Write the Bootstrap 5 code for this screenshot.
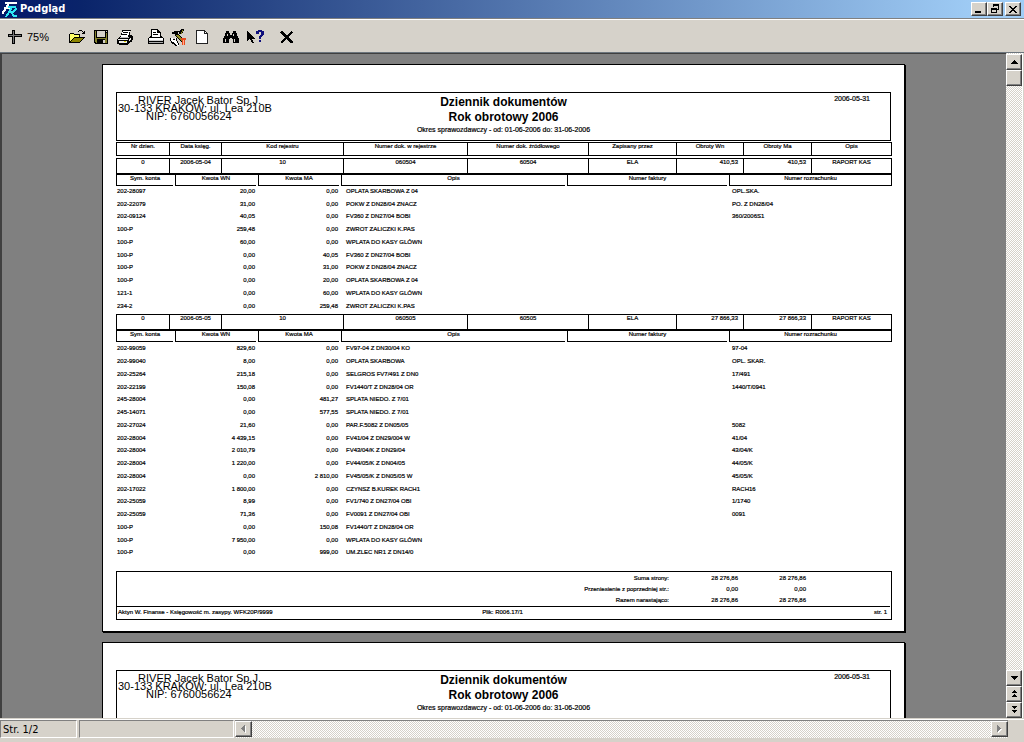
<!DOCTYPE html>
<html lang="pl">
<head>
<meta charset="utf-8">
<meta name="viewport" content="width=device-width, initial-scale=1">
<title>Podgląd</title>
<link href="https://cdn.jsdelivr.net/npm/bootstrap@5.3.0/dist/css/bootstrap.min.css" rel="stylesheet">
<style>
  :root { --face: #d6d2ca; --dark: #404040; --mid: #808080; }
  body { background: var(--face); color: #000; font-family: "DejaVu Sans Condensed", "DejaVu Sans", sans-serif; font-size: 11px; line-height: 14px; }
  button { color: #000; }
  svg { display: block; shape-rendering: crispEdges; }

  /* window chrome */
  .titlebar { height: 18px; background: linear-gradient(to right, #04196a, #0a246a 8%, #a0cdf6 96%); color: #fff; padding: 0 3px 0 2px; }
  .titlebar h1 { font-size: 11px; font-weight: 700; line-height: 18px; padding-left: 2px; }
  .raised { background: var(--face); border: 1px solid; border-color: #fff var(--dark) var(--dark) #fff; box-shadow: inset -1px -1px 0 var(--mid); border-radius: 0; padding: 0; display: flex; align-items: center; justify-content: center; flex: none; }
  .winbtn { width: 16px; height: 14px; }
  .winbtn-close { margin-left: 2px; }
  .toolbar { height: 34px; border-top: 1px solid var(--mid); box-shadow: inset 0 1px 0 #fff; padding: 3px 3px 0; }
  .tool { width: 24px; height: 24px; padding: 0; border: 0; background: none; display: flex; align-items: center; justify-content: center; }
  .tools-print { margin-left: 7px; }
  .tools-print .tool { width: 23px; }
  .tools-find { margin-left: 6px; }
  .zoomlevel { width: 38px; font-family: "Liberation Sans", Arial, sans-serif; }

  /* preview area */
  .stage { background: #808080; border-left: 2px solid var(--dark); border-top: 1px solid var(--dark); padding: 10px 101px 0 100px; gap: 10px; min-height: 0; }
  .checker { background: repeating-conic-gradient(#fff 0 25%, var(--face) 0 50%) 0 0 / 2px 2px; }
  .vbar { width: 16px; padding-top: 1px; }
  .vbar .raised { width: 16px; height: 16px; }
  .edge { width: 2px; border-left: 1px solid #fff; }

  /* printed sheet */
  .sheet { flex: none; min-height: 568px; background: #fff; border: 1px solid #000; box-shadow: 1px 1px 0 #000; padding: 27px 12px 11px 13px; font-family: "Liberation Sans", Arial, sans-serif; font-size: 6px; line-height: 7px; }
  .sheet-head { display: grid; grid-template-columns: 1fr auto 1fr; height: 49px; border: 1px solid #000; margin-right: 1px; margin-bottom: 1px; }
  .company { justify-self: start; padding: 3px 0 0 1px; font-size: 11px; line-height: 8px; text-align: center; white-space: pre; }
  .doc-title { padding-top: 2px; text-align: center; }
  .doc-title h2 { font-size: 12px; font-weight: 700; line-height: 15px; margin: 0; }
  .doc-title p { font-size: 7px; line-height: 10px; margin: 0; -webkit-text-stroke: 0.2px #000; }
  .doc-date { font-size: 7px; line-height: 10px; padding: 1px 20px 0 0; text-align: right; -webkit-text-stroke: 0.2px #000; }
  .ledger { width: 100%; table-layout: fixed; border-collapse: separate; border-spacing: 0; -webkit-text-stroke: 0.2px #000; }
  .ledger th { font-weight: 400; text-align: center; }
  .ledger th, .ledger td { padding: 0; vertical-align: top; white-space: nowrap; }
  .master th, .master td { height: 14px; text-align: center; border: solid #000; border-width: 1px 0 1px 1px; }
  .master th:last-child, .master td:last-child { border-right-width: 1px; }
  .master td { height: 15px; border-bottom-width: 0; }
  .ledger .sum { text-align: right; padding-right: 5px; }
  .colnames { margin-bottom: 2px; }
  .detail { margin-bottom: 1px; }
  .detail thead th { border-top: 2px solid #000; border-left: 1px solid #000; padding-right: 2px; }
  .detail thead th:last-child { border-right: 1px solid #000; padding-right: 0; }
  .detail thead span { display: block; height: 11px; border-bottom: 1px solid #000; }
  .detail td { height: 13px; line-height: 10px; }
  .day-one tr:nth-child(4n+2) td, .day-two tr:nth-child(4n) td { height: 12px; }
  .day-two td { line-height: 12px; }
  .detail td:nth-child(1) { padding-left: 1px; }
  .detail td:nth-child(2), .detail td:nth-child(3) { text-align: right; padding-right: 3px; }
  .detail td:nth-child(4) { padding-left: 5px; }
  .detail td:nth-child(6) { padding-left: 3px; }
  .sheet-foot { border: 1px solid #000; margin-top: auto; padding-top: 1px; }
  .totals th, .totals td { line-height: 11px; text-align: right; padding-right: 5px; }
  .totals th { padding-right: 7px; }
  .imprint { display: grid; grid-template-columns: 1fr auto 1fr; border-top: 1px solid #000; margin-right: 1px; padding: 1px 3px 2px 1px; line-height: 9px; -webkit-text-stroke: 0.2px #000; }

  /* status row */
  .statusrow { height: 24px; border-top: 1px solid var(--face); padding-top: 1px; box-shadow: inset 0 1px 0 #fff; }
  .panel { height: 18px; border: 1px solid; border-color: var(--mid) #fff #fff var(--mid); line-height: 17px; padding-left: 2px; }
  .panel-page { width: 77px; }
  .panel-msg { width: 155px; margin-left: 2px; }
  .hbar { height: 18px; margin: 0 16px 0 1px; border-top: 1px solid var(--mid); }
  .hbar .raised { width: 17px; height: 16px; }
</style>
</head>
<body class="vh-100 d-flex flex-column overflow-hidden">

<header class="titlebar d-flex align-items-center">
  <svg width="16" height="17" viewBox="0 0 16 17" fill="none" aria-hidden="true">
    <path d="M3 2h12M7 2L4 7L0 13M2 7h7" stroke="#fff" stroke-width="2"/>
    <path d="M6 6h7l1 2l-3 3h-4M10 6L7 11l-3 5M9 11l3 4h3" stroke="#2ee6f6" stroke-width="2"/>
  </svg>
  <h1 class="m-0 flex-grow-1">Podgląd</h1>
  <button class="raised winbtn" aria-label="Minimalizuj"><svg width="12" height="10"><path d="M2 7h6v2h-6z"/></svg></button>
  <button class="raised winbtn" aria-label="Przywróć"><svg width="12" height="10"><path d="M4 0h6v6h-2v-1h1v-3h-4v1h-1zM2 4h6v5h-6zM3 6v2h4v-2z" fill-rule="evenodd"/></svg></button>
  <button class="raised winbtn winbtn-close" aria-label="Zamknij"><svg width="10" height="9"><path d="M1 1h2v1h1v1h2v-1h1v-1h2v1h-1v1h-1v1h-1v1h1v1h1v1h1v1h-2v-1h-1v-1h-2v1h-1v1h-2v-1h1v-1h1v-1h1v-1h-1v-1h-1v-1h-1z"/></svg></button>
</header>

<nav class="toolbar d-flex align-items-center flex-shrink-0" aria-label="Narzędzia">
  <button class="tool" aria-label="Powiększenie"><svg width="14" height="14"><path d="M0 4h14v3h-14zM4 0h3v14h-3z"/><path d="M1 5h12v1h-12zM5 1h1v12h-1z" fill="#777"/></svg></button>
  <span class="zoomlevel">75%</span>
  <div class="d-flex">
    <button class="tool" aria-label="Otwórz"><svg width="17" height="14"><path d="M0 4h1v-1h4v1h6v3h5v1h-1v1h-1v1h-1v1h-1v1h-1v1h-11z"/><path d="M1 4h4v1h5v2h-5v1h-1v1h-1v1h-1v1h-1z" fill="#ffff66"/><path d="M5 8h9v1h-1v1h-1v1h-1v1h-9v-1h1v-1h1v-1h1z" fill="#8c8400"/><path d="M9 1h1v1h-1zM10 0h3v1h-3zM13 1h1v1h-1zM14 2h1v-1h1v3h-3v-1h1z"/></svg></button>
    <button class="tool" aria-label="Zapisz"><svg width="14" height="14"><path d="M0 0h14v14h-13v-1h-1z"/><path d="M1 1h1v7h10v-5h1v10h-2v-4h-8v4h-1l-1-1z" fill="#84822c"/><path d="M3 1h8v6h-8zM12 1h1v1h-1zM9 10h2v3h-2z" fill="#d6d2ca"/></svg></button>
    <button class="tool" aria-label="Drukuj"><svg width="17" height="15"><path d="M5 0h9v1h-1v4h2v1h1v4h-1v2h-2v1h-1v1h-1v1h-9v-1h-2v-5h1v-1h1v-1h1v-1h1v-3h1z"/><path d="M6 1h7l-2 6h-7z" fill="#fff"/><path d="M6 2h5v1h-5zM5 4h5v1h-5z"/><path d="M1 9h10v1h-10zM2 11h8v2h-8zM12 9h1v-1h1v2h-1v1h-1z" fill="#f0eeea"/><path d="M3 7h9v1h-9z" fill="#bbb"/><path d="M7 11h2v1h-2z" fill="#d9d000"/></svg></button>
  </div>
  <div class="d-flex tools-print">
    <button class="tool" aria-label="Ustawienia wydruku"><svg width="16" height="16"><path d="M3 0h7v1h1v1h1v1h1v4h1v1h1v1h1v6h-16v-6h1v-1h1v-1h1z"/><path d="M4 1h5v3h3v4h-8z" fill="#fff"/><path d="M5 3h3v1h-3zM5 5h5v1h-5z"/><path d="M1 9h14v2h-14z" fill="#fff"/><path d="M1 11h14v1h-14z" fill="#ccc"/><path d="M1 13h14v1h-14z" fill="#aaa"/></svg></button>
    <button class="tool" aria-label="Opcje"><svg width="17" height="17" fill="none"><path d="M6 5L14 13" stroke="#000" stroke-width="4"/><path d="M6 5L14 13" stroke="#8c8a20" stroke-width="2"/><path d="M2 3h2v-1h6v1h-2v3h-2v1h-1v-2h-3z" fill="#000"/><path d="M13 0L10 5" stroke="#000" stroke-width="3"/><path d="M13 1L11 5" stroke="#8c8a20"/><path d="M1 9h2v2h2v-2h1v2h1v2h1v2h1v2h-2v-1h-2v-2h-3v-1h-1z" fill="#fff"/><path d="M0 9h1v3h-1zM1 12h1v1h2v1h1v1h1v1h1v1h-2v-1h-1v-1h-2v-1h-1zM3 10h2v1h-2zM6 9h1v3h1v2h1v2h-1v-2h-1v-2h-1z" fill="#000"/><path d="M11 9h5v2h-1v5h-3v-5h-1z" fill="#e84a1c"/><path d="M13 11h1v5h-1z" fill="#ffb090"/></svg></button>
    <button class="tool" aria-label="Strona"><svg width="12" height="14"><path d="M0 0h9v1h1v1h1v1h1v11h-12z" fill="#222"/><path d="M1 1h7v3h3v9h-10z" fill="#fff"/><path d="M9 2h1v1h-1z" fill="#fff"/></svg></button>
  </div>
  <div class="d-flex tools-find">
    <button class="tool" aria-label="Szukaj"><svg width="16" height="13"><path d="M3 0h3v2h1v2h2v-2h1v-2h3v2h1v3h1v2h1v5h-6v-4h-1v-1h-2v1h-1v4h-6v-5h1v-2h1v-3h1z"/><path d="M4 3h1v2h-1zM2 8h1v3h-1zM10 3h1v2h-1zM11 8h1v3h-1z" fill="#d6d2ca"/></svg></button>
    <button class="tool" aria-label="Pomoc"><svg width="17" height="15"><path d="M0 1l8 8h-3l2 4h-2l-2-4l-3 2z"/><path d="M9 1h2v-1h4v1h2v4h-1v1h-1v1h-1v2h-2v-3h1v-1h1v-3h-2v2h-3zM12 10h2v2h-2z" fill="#10107c"/></svg></button>
  </div>
  <button class="tool ms-2" aria-label="Zamknij podgląd"><svg width="14" height="13" fill="none" stroke="#000"><path d="M1 1L12 12M2 1L13 12M12 1L1 12" stroke-width="2"/></svg></button>
</nav>

<div class="d-flex flex-grow-1 overflow-hidden border-top border-secondary">
  <main class="stage d-flex flex-column flex-grow-1 overflow-hidden">

    <article class="sheet d-flex flex-column">
      <div class="sheet-head">
        <div class="company">   RIVER Jacek Bator Sp.J.
30-133 KRAKÓW: ul. Lea 210B
NIP: 6760056624    </div>
        <div class="doc-title"><h2>Dziennik dokumentów</h2><h2>Rok obrotowy 2006</h2><p>Okres sprawozdawczy - od: 01-06-2006 do: 31-06-2006</p></div>
        <div class="doc-date">2006-05-31</div>
      </div>

      <table class="ledger master colnames">
        <colgroup><col style="width:53px"><col style="width:52px"><col><col style="width:124px"><col style="width:121px"><col style="width:88px"><col style="width:67px"><col style="width:68px"><col style="width:81px"></colgroup>
        <thead><tr><th>Nr dzien.</th><th>Data księg.</th><th>Kod rejestru</th><th>Numer dok. w rejestrze</th><th>Numer dok. źródłowego</th><th>Zapisany przez</th><th>Obroty Wn</th><th>Obroty Ma</th><th>Opis</th></tr></thead>
      </table>

      <table class="ledger master">
        <colgroup><col style="width:53px"><col style="width:52px"><col><col style="width:124px"><col style="width:121px"><col style="width:88px"><col style="width:67px"><col style="width:68px"><col style="width:81px"></colgroup>
        <tbody><tr><td>0</td><td>2006-05-04</td><td>10</td><td>060504</td><td>60504</td><td>ELA</td><td class="sum">410,53</td><td class="sum">410,53</td><td>RAPORT KAS</td></tr></tbody>
      </table>
      <table class="ledger detail">
        <colgroup><col style="width:59px"><col style="width:83px"><col style="width:83px"><col><col style="width:162px"><col style="width:163px"></colgroup>
        <thead><tr><th><span>Sym. konta</span></th><th><span>Kwota WN</span></th><th><span>Kwota MA</span></th><th><span>Opis</span></th><th><span>Numer faktury</span></th><th><span>Numer rozrachunku</span></th></tr></thead>
        <tbody class="day-one">
          <tr><td>202-28097</td><td>20,00</td><td>0,00</td><td>OPLATA SKARBOWA Z 04</td><td></td><td>OPL.SKA.</td></tr>
          <tr><td>202-22079</td><td>31,00</td><td>0,00</td><td>POKW Z DN28/04 ZNACZ</td><td></td><td>PO. Z DN28/04</td></tr>
          <tr><td>202-09124</td><td>40,05</td><td>0,00</td><td>FV360 Z DN27/04 BOBI</td><td></td><td>360/2006S1</td></tr>
          <tr><td>100-P</td><td>259,48</td><td>0,00</td><td>ZWROT ZALICZKI K.PAS</td><td></td><td></td></tr>
          <tr><td>100-P</td><td>60,00</td><td>0,00</td><td>WPLATA DO KASY GLÓWN</td><td></td><td></td></tr>
          <tr><td>100-P</td><td>0,00</td><td>40,05</td><td>FV360 Z DN27/04 BOBI</td><td></td><td></td></tr>
          <tr><td>100-P</td><td>0,00</td><td>31,00</td><td>POKW Z DN28/04 ZNACZ</td><td></td><td></td></tr>
          <tr><td>100-P</td><td>0,00</td><td>20,00</td><td>OPLATA SKARBOWA Z 04</td><td></td><td></td></tr>
          <tr><td>121-1</td><td>0,00</td><td>60,00</td><td>WPLATA DO KASY GLÓWN</td><td></td><td></td></tr>
          <tr><td>234-2</td><td>0,00</td><td>259,48</td><td>ZWROT ZALICZKI K.PAS</td><td></td><td></td></tr>
        </tbody>
      </table>

      <table class="ledger master">
        <colgroup><col style="width:53px"><col style="width:52px"><col><col style="width:124px"><col style="width:121px"><col style="width:88px"><col style="width:67px"><col style="width:68px"><col style="width:81px"></colgroup>
        <tbody><tr><td>0</td><td>2006-05-05</td><td>10</td><td>060505</td><td>60505</td><td>ELA</td><td class="sum">27 866,33</td><td class="sum">27 866,33</td><td>RAPORT KAS</td></tr></tbody>
      </table>
      <table class="ledger detail">
        <colgroup><col style="width:59px"><col style="width:83px"><col style="width:83px"><col><col style="width:162px"><col style="width:163px"></colgroup>
        <thead><tr><th><span>Sym. konta</span></th><th><span>Kwota WN</span></th><th><span>Kwota MA</span></th><th><span>Opis</span></th><th><span>Numer faktury</span></th><th><span>Numer rozrachunku</span></th></tr></thead>
        <tbody class="day-two">
          <tr><td>202-99059</td><td>829,60</td><td>0,00</td><td>FV97-04 Z DN30/04 KO</td><td></td><td>97-04</td></tr>
          <tr><td>202-99040</td><td>8,00</td><td>0,00</td><td>OPLATA SKARBOWA</td><td></td><td>OPL. SKAR.</td></tr>
          <tr><td>202-25264</td><td>215,18</td><td>0,00</td><td>SELGROS FV7/491 Z DN0</td><td></td><td>17/491</td></tr>
          <tr><td>202-22199</td><td>150,08</td><td>0,00</td><td>FV1440/T Z DN28/04 OR</td><td></td><td>1440/T/0941</td></tr>
          <tr><td>245-28004</td><td>0,00</td><td>481,27</td><td>SPLATA NIEDO. Z 7/01</td><td></td><td></td></tr>
          <tr><td>245-14071</td><td>0,00</td><td>577,55</td><td>SPLATA NIEDO. Z 7/01</td><td></td><td></td></tr>
          <tr><td>202-27024</td><td>21,60</td><td>0,00</td><td>PAR.F.5082 Z DN05/05</td><td></td><td>5082</td></tr>
          <tr><td>202-28004</td><td>4 439,15</td><td>0,00</td><td>FV41/04 Z DN29/004 W</td><td></td><td>41/04</td></tr>
          <tr><td>202-28004</td><td>2 010,79</td><td>0,00</td><td>FV43/04/K Z DN29/04</td><td></td><td>43/04/K</td></tr>
          <tr><td>202-28004</td><td>1 220,00</td><td>0,00</td><td>FV44/05/K Z DN04/05</td><td></td><td>44/05/K</td></tr>
          <tr><td>202-28004</td><td>0,00</td><td>2 810,00</td><td>FV45/05/K Z DN05/05 W</td><td></td><td>45/05/K</td></tr>
          <tr><td>202-17022</td><td>1 800,00</td><td>0,00</td><td>CZYNSZ B.KUREK RACH1</td><td></td><td>RACH16</td></tr>
          <tr><td>202-25059</td><td>8,99</td><td>0,00</td><td>FV1/740 Z DN27/04 OBI</td><td></td><td>1/1740</td></tr>
          <tr><td>202-25059</td><td>71,36</td><td>0,00</td><td>FV0091 Z DN27/04 OBI</td><td></td><td>0091</td></tr>
          <tr><td>100-P</td><td>0,00</td><td>150,08</td><td>FV1440/T Z DN28/04 OR</td><td></td><td></td></tr>
          <tr><td>100-P</td><td>7 950,00</td><td>0,00</td><td>WPLATA DO KASY GLÓWN</td><td></td><td></td></tr>
          <tr><td>100-P</td><td>0,00</td><td>999,00</td><td>UM.ZLEC NR1 Z DN14/0</td><td></td><td></td></tr>
        </tbody>
      </table>

      <footer class="sheet-foot">
        <table class="ledger totals">
          <colgroup><col><col style="width:67px"><col style="width:68px"><col style="width:80px"></colgroup>
          <tbody>
            <tr><th scope="row">Suma strony:</th><td>28 276,86</td><td>28 276,86</td><td></td></tr>
            <tr><th scope="row">Przeniesienie z poprzedniej str.:</th><td>0,00</td><td>0,00</td><td></td></tr>
            <tr><th scope="row">Razem narastająco:</th><td>28 276,86</td><td>28 276,86</td><td></td></tr>
          </tbody>
        </table>
        <div class="imprint"><span>Aktyn W. Finanse - Księgowość m. zasypy. WFK20P/9999</span><span>Plik: R006.17/1</span><span class="text-end">str. 1</span></div>
      </footer>
    </article>

    <article class="sheet">
      <div class="sheet-head">
        <div class="company">   RIVER Jacek Bator Sp.J.
30-133 KRAKÓW: ul. Lea 210B
NIP: 6760056624    </div>
        <div class="doc-title"><h2>Dziennik dokumentów</h2><h2>Rok obrotowy 2006</h2><p>Okres sprawozdawczy - od: 01-06-2006 do: 31-06-2006</p></div>
        <div class="doc-date">2006-05-31</div>
      </div>
    </article>
  </main>

  <aside class="vbar checker d-flex flex-column flex-shrink-0" aria-label="Przewijanie strony">
    <button class="raised" aria-label="W górę"><svg width="7" height="4"><path d="M3 0h1v1h1v1h1v1h1v1h-7v-1h1v-1h1v-1h1z"/></svg></button>
    <button class="raised mb-auto" aria-label="Suwak"></button>
    <button class="raised" aria-label="W dół"><svg width="7" height="4"><path d="M0 0h7v1h-1v1h-1v1h-1v1h-1v-1h-1v-1h-1v-1h-1z"/></svg></button>
    <button class="raised" aria-label="Poprzednia strona"><svg width="5" height="8"><path d="M2 0h1v1h1v1h1v1h-5v-1h1v-1h1zM2 4h1v1h1v1h1v1h-5v-1h1v-1h1z"/></svg></button>
    <button class="raised" aria-label="Następna strona"><svg width="5" height="8"><path d="M0 0h5v1h-1v1h-1v1h-1v-1h-1v-1h-1zM0 4h5v1h-1v1h-1v1h-1v-1h-1v-1h-1z"/></svg></button>
  </aside>
  <div class="edge flex-shrink-0"></div>
</div>

<footer class="statusrow d-flex flex-shrink-0">
  <div class="panel panel-page">Str. 1/2</div>
  <div class="panel panel-msg"></div>
  <div class="hbar checker d-flex justify-content-between flex-grow-1">
    <button class="raised" aria-label="W lewo"><svg width="5" height="8"><path d="M5 1h-1v1h-1v1h-1v1h-1v1h1v1h1v1h1v1h1z" fill="#fff"/><path d="M4 0v7h-1v-1h-1v-1h-1v-1h-1v-1h1v-1h1v-1h1v-1z" fill="#808080"/></svg></button>
    <button class="raised" aria-label="W prawo"><svg width="5" height="9"><path d="M1 1h1v1h1v1h1v1h1v1h-1v1h-1v1h-1v1h-1z" fill="#fff"/><path d="M0 0h1v1h1v1h1v1h1v1h-1v1h-1v1h-1v1h-1z" fill="#808080"/></svg></button>
  </div>
</footer>

<script src="https://cdn.jsdelivr.net/npm/bootstrap@5.3.0/dist/js/bootstrap.bundle.min.js"></script>
</body>
</html>
